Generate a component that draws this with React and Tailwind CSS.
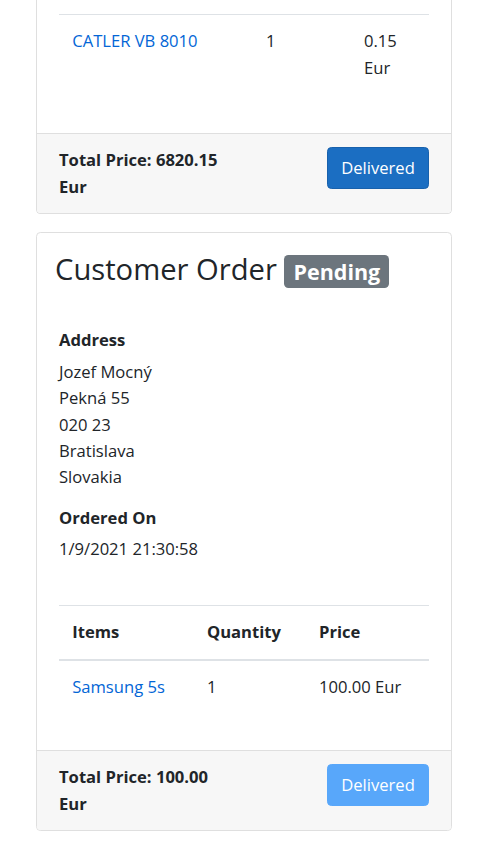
import React from 'react';

const font = { fontFamily: '"Open Sans", "Noto Sans", Arial, sans-serif' };

function Footer({ total, disabled }) {
    return (
        <div className="flex items-start justify-between border-t border-[#dfdfdf] bg-[#f7f7f7] px-[22px] pt-[13.2px] pb-[12.5px]">
            <div className="w-[172px] font-bold">Total Price: {total} Eur</div>
            <button
                disabled={disabled}
                className={`rounded-[4.4px] border px-[13.2px] py-[6.6px] text-white ${disabled ? 'border-[#58a7fa] bg-[#58a7fa]' : 'border-[#1861ac] bg-[#1b6ec2]'}`}
            >
                Delivered
            </button>
        </div>
    );
}

export default function App() {
    return (
        <div className="min-h-screen bg-white text-[16.6px] leading-[26.4px] text-[#212529]" style={font}>
            <div className="ml-[36px] w-[416px]">
                {/* Previous order, scrolled partly out of view */}
                <div className="overflow-hidden rounded-b-[4.4px] border border-t-0 border-[#dfdfdf]">
                    <div className="px-[22px] pt-[14px] pb-[39px]">
                        <table className="w-full table-fixed border-collapse">
                            <colgroup>
                                <col className="w-[193.8px]" />
                                <col className="w-[98px]" />
                                <col className="w-[78.2px]" />
                            </colgroup>
                            <tbody>
                                <tr className="border-t border-[#dee2e6]">
                                    <td className="p-[13.2px] align-top">
                                        <a href="#" className="text-[#0366d6]">CATLER VB 8010</a>
                                    </td>
                                    <td className="p-[13.2px] align-top">1</td>
                                    <td className="p-[13.2px] align-top">0.15 Eur</td>
                                </tr>
                            </tbody>
                        </table>
                    </div>
                    <Footer total="6820.15" />
                </div>

                {/* Current order */}
                <div className="mt-[18px] overflow-hidden rounded-[4.4px] border border-[#dfdfdf]">
                    <div className="px-[22px] pt-[22px] pb-[37px]">
                        <h3 className="-mt-[4px] -ml-[4px] text-[29.2px] leading-[37px] font-normal">
                            Customer Order{' '}
                            <span className="inline-block rounded-[4.4px] bg-[#6c757d] px-[9px] py-[5.5px] text-[21.5px] leading-none font-bold text-white">
                                Pending
                            </span>
                        </h3>

                        <div className="mt-[39px] font-bold">Address</div>
                        <div className="mt-[5.6px]">
                            <div>Jozef Mocný</div>
                            <div>Pekná 55</div>
                            <div>020 23</div>
                            <div>Bratislava</div>
                            <div>Slovakia</div>
                        </div>

                        <div className="mt-[14.6px] font-bold">Ordered On</div>
                        <div className="mt-[4.6px]">1/9/2021 21:30:58</div>

                        <table className="mt-[42px] w-full table-fixed border-collapse">
                            <colgroup>
                                <col className="w-[134.8px]" />
                                <col className="w-[112px]" />
                                <col className="w-[123.2px]" />
                            </colgroup>
                            <thead>
                                <tr className="border-t border-b-2 border-[#dee2e6] text-left">
                                    <th className="p-[13.2px] font-bold">Items</th>
                                    <th className="p-[13.2px] font-bold">Quantity</th>
                                    <th className="p-[13.2px] font-bold">Price</th>
                                </tr>
                            </thead>
                            <tbody>
                                <tr>
                                    <td className="p-[13.2px] align-top">
                                        <a href="#" className="text-[#0366d6]">Samsung 5s</a>
                                    </td>
                                    <td className="p-[13.2px] align-top">1</td>
                                    <td className="p-[13.2px] align-top">100.00 Eur</td>
                                </tr>
                            </tbody>
                        </table>
                    </div>
                    <Footer total="100.00" disabled />
                </div>
            </div>
        </div>
    );
}
